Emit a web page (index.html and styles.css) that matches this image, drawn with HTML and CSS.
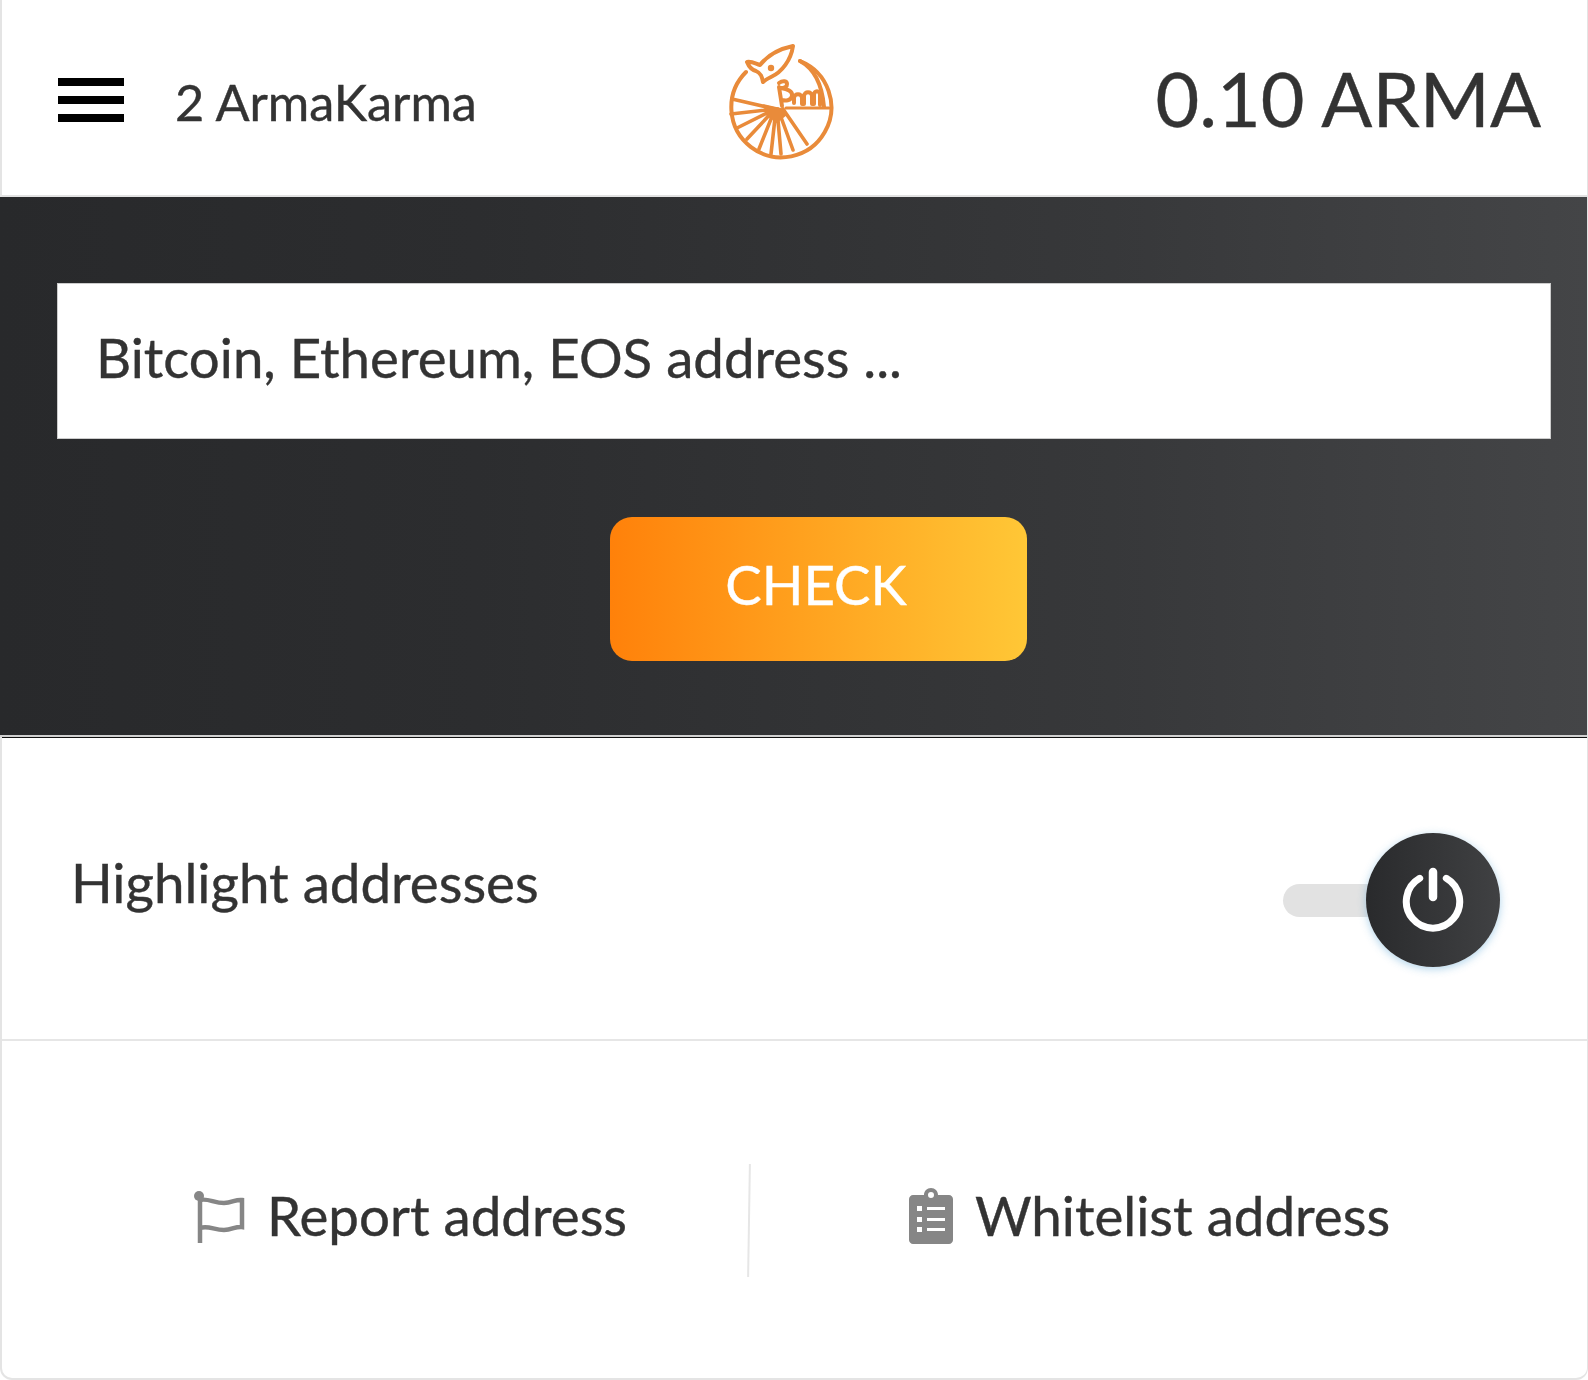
FILE: index.html
```html
<!DOCTYPE html>
<html lang="en">
<head>
<meta charset="utf-8">
<title>ArmaKarma</title>
<link rel="stylesheet" href="styles.css">
</head>
<body>
<div class="popup">
  <header class="top">
    <div class="top-left">
      <div class="burger"><span></span><span></span><span></span></div>
      <span class="karma">2 ArmaKarma</span>
    </div>
    <svg class="logo" viewBox="0 0 140 140" fill="none" stroke="#e98b3a" stroke-width="4" stroke-linejoin="round" stroke-linecap="round">
      <path d="M37 41A50 50 0 1 0 91 30"/>
      <path d="M91 30C104 37 113 52 115 76"/>
      <path d="M38 31C43 30 47 33 51 34C58 25 70 18 84 15C82 29 73 41 62 46C58 48 55 50 54 51C53 46 52 42 47 40C43 39 40 36 38 31Z"/>
      <circle cx="62" cy="37" r="3.2" fill="#e98b3a" stroke="none"/>
      <path d="M70 52C74 49 78 50 78 53C78 56 75 57 72 57C78 58 84 60 83 65C82 70 76 70 73 69M70 56L73 75"/>
      <path d="M85 72V67C85 62 93 62 93 67V73M95 73V65C95 60 103 60 103 65V73M105 73V64C105 59 111 59 111 64V74"/>
      <path d="M77 77H120" stroke-width="3"/>
      <path d="M23 68L66 78M22 83L66 78M28 97L66 78M38 108L66 78M50 118L66 78M62 123L67 78M72 123L68 78M84 119L69 78M98 113L74 78" stroke-width="3.6"/>
      <path d="M54 73L76 78L78 84L68 92L58 85Z" fill="#e98b3a" stroke="none"/>
    </svg>
    <div class="balance">0.10 ARMA</div>
  </header>
  <section class="search">
    <input class="address" type="text" placeholder="Bitcoin, Ethereum, EOS address ...">
    <button class="check" type="button">CHECK</button>
  </section>
  <section class="highlight">
    <span class="highlight-label">Highlight addresses</span>
    <div class="toggle">
      <div class="track"></div>
      <div class="knob">
        <svg viewBox="0 0 64 68" fill="none" stroke="#fff" stroke-width="7" stroke-linecap="round">
          <path d="M18.7 14.3A26.7 26.7 0 1 0 45.3 14.3"/>
          <path d="M32 8V33" stroke-width="8.5"/>
        </svg>
      </div>
    </div>
  </section>
  <footer class="actions">
    <a class="action report">
      <svg class="flag" viewBox="0 0 52 54" fill="none" stroke="#868686" stroke-width="4.5">
        <path d="M6 5V52"/>
        <circle cx="5" cy="5" r="5" fill="#868686" stroke="none"/>
        <path d="M6 9C14 7 20 12 30 12C38 12 42 8 48 9V36C42 35 38 39 30 39C20 39 14 34 6 37"/>
      </svg>
      <span>Report address</span>
    </a>
    <div class="divider"></div>
    <a class="action whitelist">
      <svg class="clip" viewBox="0 0 44 56">
        <path fill="#868686" fill-rule="evenodd" d="M4 7H15C15 3 18 0 22 0S29 3 29 7H40C42 7 44 9 44 11V52C44 54 42 56 40 56H4C2 56 0 54 0 52V11C0 9 2 7 4 7ZM22 4A3 3 0 1 0 22 10A3 3 0 1 0 22 4ZM18 19V22H36V19ZM18 30V33H36V30ZM18 40V43H36V40ZM8 18V23H13V18ZM8 29V34H13V29ZM8 39V44H13V39Z"/>
      </svg>
      <span>Whitelist address</span>
    </a>
  </footer>
</div>
</body>
</html>
```
FILE: styles.css
```css
* { box-sizing: border-box; }
html, body { margin: 0; padding: 0; background: #fff; }
body { font-family: Lato, "Open Sans", sans-serif; color: #333; width: 1588px; height: 1380px; overflow: hidden; -webkit-text-stroke: 0.4px currentColor; }
.popup { width: 1588px; height: 1380px; display: flex; flex-direction: column; border-left: 2px solid #e4e4e4; border-right: 1px solid #e4e4e4; border-bottom: 2px solid #e4e4e4; border-radius: 0 0 12px 12px; }
.top { height: 197px; flex: none; display: flex; align-items: center; padding: 0 46px 0 56px; border-bottom: 2px solid #e2e2e2; }
.top-left { width: 651px; display: flex; align-items: center; }
.burger { width: 66px; height: 44px; margin-top: 4px; display: flex; flex-direction: column; justify-content: space-between; }
.burger span { display: block; height: 8px; background: #000; }
.karma { margin-left: 51px; margin-top: 8px; font-size: 50.4px; }
.logo { width: 140px; height: 140px; flex: none; margin-top: 7px; }
.balance { margin-left: auto; font-size: 75.5px; }
.search { margin-left: -2px; height: 540px; flex: none; background: linear-gradient(90deg, #28292b 0%, #2c2d2f 30%, #37383a 70%, #444547 100%); padding: 86px 36px 0 57px; display: flex; flex-direction: column; align-items: center; border-bottom: 2px solid #d0d0d0; }
.address { width: 100%; height: 156px; flex: none; border: 1px solid #ccc; background: #fff; padding: 0 38px 8px; font: 54.6px Lato, sans-serif; color: #333; outline: none; }
.address::placeholder { color: #333; opacity: 1; }
.check { width: 417px; height: 144px; margin-top: 78px; margin-left: 28px; padding: 0 4px 10px 0; border: none; border-radius: 22px; background: linear-gradient(90deg, #ff810a, #ffc736); color: #fff; font: 54.6px Lato, sans-serif; -webkit-text-stroke: 0.4px #fff; }
.highlight { height: 304px; flex: none; display: flex; align-items: center; justify-content: space-between; padding: 0 87px 13px 69px; border-top: 1px solid #111; border-bottom: 2px solid #e6e6e6; }
.highlight-label { font-size: 54.7px; }
.toggle { position: relative; width: 217px; height: 134px; display: flex; align-items: center; margin-top: 36px; }
.track { width: 180px; height: 33px; border-radius: 17px; background: #e2e2e2; }
.knob { position: absolute; right: 0; top: 0; width: 134px; height: 134px; border-radius: 50%; background: linear-gradient(90deg, #292a2c, #404143); box-shadow: 0 2px 8px rgba(80, 160, 210, 0.45); display: flex; align-items: center; justify-content: center; }
.knob svg { width: 64px; height: 68px; margin-bottom: 4px; }
.actions { flex: 1; display: flex; align-items: center; padding-top: 10px; }
.action { display: flex; align-items: center; font-size: 54.7px; color: #333; }
.report { width: 746px; justify-content: flex-end; padding-right: 121px; }
.report span { margin-left: 21px; }
.flag { width: 52px; height: 54px; margin-top: 6px; }
.divider { width: 2px; height: 113px; margin-top: 12px; background: #e6e6e6; transform: rotate(0.9deg); }
.whitelist { flex: 1; padding-left: 159px; }
.whitelist span { margin-left: 22px; }
.clip { width: 44px; height: 56px; margin-top: 2px; }
```
